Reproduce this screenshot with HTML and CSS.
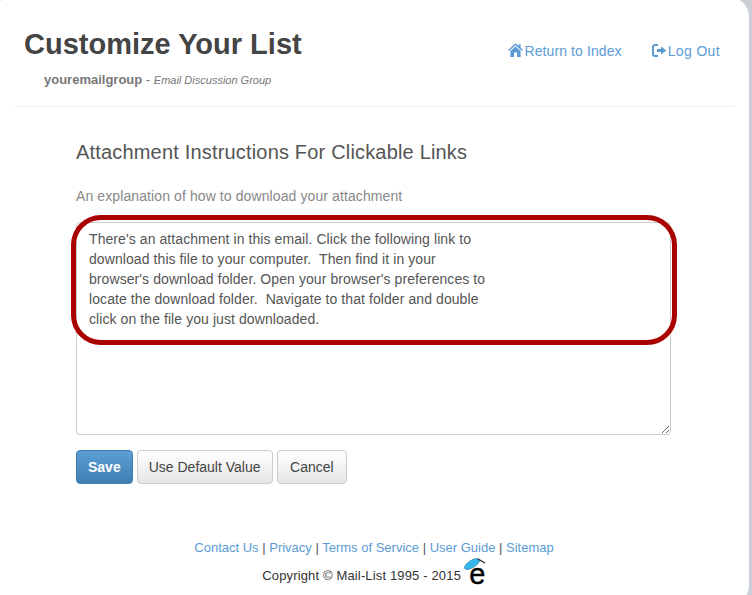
FILE: index.html
```html
<!DOCTYPE html>
<html>
<head>
<meta charset="utf-8">
<title>Customize Your List</title>
<link rel="stylesheet" href="styles.css">
</head>

<body>
    <div class="sheet">
        <!-- header -->
        <div class="header">
            <div class="heading">
                <h1>Customize Your List</h1>
                <p class="sub"><b>youremailgroup</b> - <i>Email Discussion Group</i></p>
            </div>
            <div class="nav">
                <a href="#">
                    <svg class="icon home" width="15" height="14" viewBox="0 0 15 14"><path d="M7.5 0.2 L10.6 3 V1.2 H12.6 V4.8 L15 7 L14 8 L7.5 2.2 L1 8 L0 7 Z M2.4 8 L7.5 3.5 L12.6 8 V14 H9 V9.6 H6 V14 H2.4 Z" fill="#5b9bd5"/></svg>Return to Index
                </a>
                <a href="#" class="logout">
                    <svg class="icon" width="15" height="13" viewBox="0 0 15 13"><path d="M6 1 H3 Q1 1 1 3 V10 Q1 12 3 12 H6" fill="none" stroke="#5b9bd5" stroke-width="2"/><path d="M5 5 H9 V2.4 L14.4 6.5 L9 10.6 V8 H5 Z" fill="#5b9bd5"/></svg>Log Out
                </a>
            </div>
        </div>

        <!-- form -->
        <div class="content">
            <h2>Attachment Instructions For Clickable Links</h2>
            <p class="help">An explanation of how to download your attachment</p>
            <div class="field">
                <textarea>There's an attachment in this email. Click the following link to
download this file to your computer.  Then find it in your
browser's download folder. Open your browser's preferences to
locate the download folder.  Navigate to that folder and double
click on the file you just downloaded.</textarea>
                <div class="callout"></div>
            </div>
            <div class="buttons">
                <button class="btn primary">Save</button>
                <button class="btn">Use Default Value</button>
                <button class="btn cancel">Cancel</button>
            </div>
        </div>

        <!-- footer -->
        <div class="footer">
            <p class="links"><a href="#">Contact Us</a> | <a href="#">Privacy</a> | <a href="#">Terms of Service</a> | <a href="#">User Guide</a> | <a href="#">Sitemap</a></p>
            <p class="copy">Copyright © Mail-List 1995 - 2015
                <svg class="logo" width="26" height="36" viewBox="0 0 26 36">
                    <text x="6.3" y="28" font-family="Liberation Sans" font-size="29" fill="#000" stroke="#000" stroke-width="0.4">e</text>
                    <ellipse cx="9" cy="8" rx="8.6" ry="3.6" transform="rotate(-32 9 8)" fill="#35b5e8" stroke="#2a7fa8" stroke-width="0.6"/>
                    <path d="M15 3 L22 7" stroke="#222" stroke-width="1.2"/>
                </svg>
            </p>
        </div>
    </div>
</body>

</html>
```

FILE: styles.css
```css
* {
    margin: 0;
    padding: 0;
    box-sizing: border-box;
}

html,
body {
    height: 100%;
    overflow: hidden;
}

body {
    background-color: #c9cfd4;
    font-family: "Liberation Sans", Arial, sans-serif;
    font-size: 14px;
    color: #555;
}

.sheet {
    width: 757px;
    height: 608px;
    margin: -3px 0 0 -8px;
    padding: 3px 0 0 30px;
    background-color: #fff;
    border-radius: 20px;
}

a {
    color: #5b9bd5;
    text-decoration: none;
}

.header {
    display: flex;
    justify-content: space-between;
    width: 720px;
    height: 107px;
    margin-left: -8px;
    padding: 28px 14px 0 10px;
    border-bottom: 1px solid #eee;
}

h1 {
    font-size: 29px;
    line-height: 33px;
    font-weight: bold;
    color: #444;
}

.sub {
    margin: 11px 0 0 20px;
    font-size: 13px;
    line-height: 16px;
    color: #777;
}

.sub i {
    font-size: 11px;
}

.nav {
    display: flex;
    gap: 30px;
    padding-top: 14px;
    font-size: 14px;
    line-height: 18px;
    letter-spacing: 0.1px;
}

.logout {
    letter-spacing: 0.35px;
}

.icon {
    margin-right: 1px;
    vertical-align: -1px;
}

.home {
    margin-right: 2px;
}

.content {
    width: 595px;
    margin-left: 54px;
}

h2 {
    margin-top: 33px;
    font-size: 20px;
    line-height: 24px;
    font-weight: normal;
    letter-spacing: 0.18px;
    color: #555;
}

.help {
    margin-top: 22px;
    line-height: 20px;
    letter-spacing: 0.1px;
    color: #888;
}

.field {
    position: relative;
    margin-top: 16px;
}

textarea {
    display: block;
    width: 595px;
    height: 213px;
    padding: 6px 12px;
    border: 1px solid #ccc;
    border-radius: 4px;
    font-family: inherit;
    font-size: 14px;
    line-height: 20px;
    letter-spacing: 0.08px;
    color: #555;
    outline: none;
    white-space: pre-wrap;
}

.callout {
    position: absolute;
    left: -5px;
    top: -7px;
    width: 606px;
    height: 130px;
    border: 5px solid #a90000;
    border-radius: 30px;
}

.buttons {
    display: flex;
    gap: 4px;
    margin-top: 15px;
}

.btn {
    height: 34px;
    padding: 0 11px;
    border: 1px solid #ccc;
    border-radius: 4px;
    background: linear-gradient(#fff, #e6e6e6);
    font-family: inherit;
    font-size: 14px;
    color: #444;
}

.primary {
    border-color: #3e7cae;
    background: linear-gradient(#5b9fd6, #3f7fb1);
    color: #fff;
    font-weight: bold;
}

.cancel {
    padding: 0 12.5px;
}

.footer {
    width: 720px;
    margin-left: -8px;
    text-align: center;
}

.links {
    margin-top: 55px;
    font-size: 13px;
    line-height: 18px;
}

.copy {
    margin-top: -1px;
    font-size: 13px;
    line-height: 18px;
    letter-spacing: 0.15px;
    color: #333;
}

.logo {
    margin: 0 -3px 0 -2px;
    vertical-align: -12px;
}
```
